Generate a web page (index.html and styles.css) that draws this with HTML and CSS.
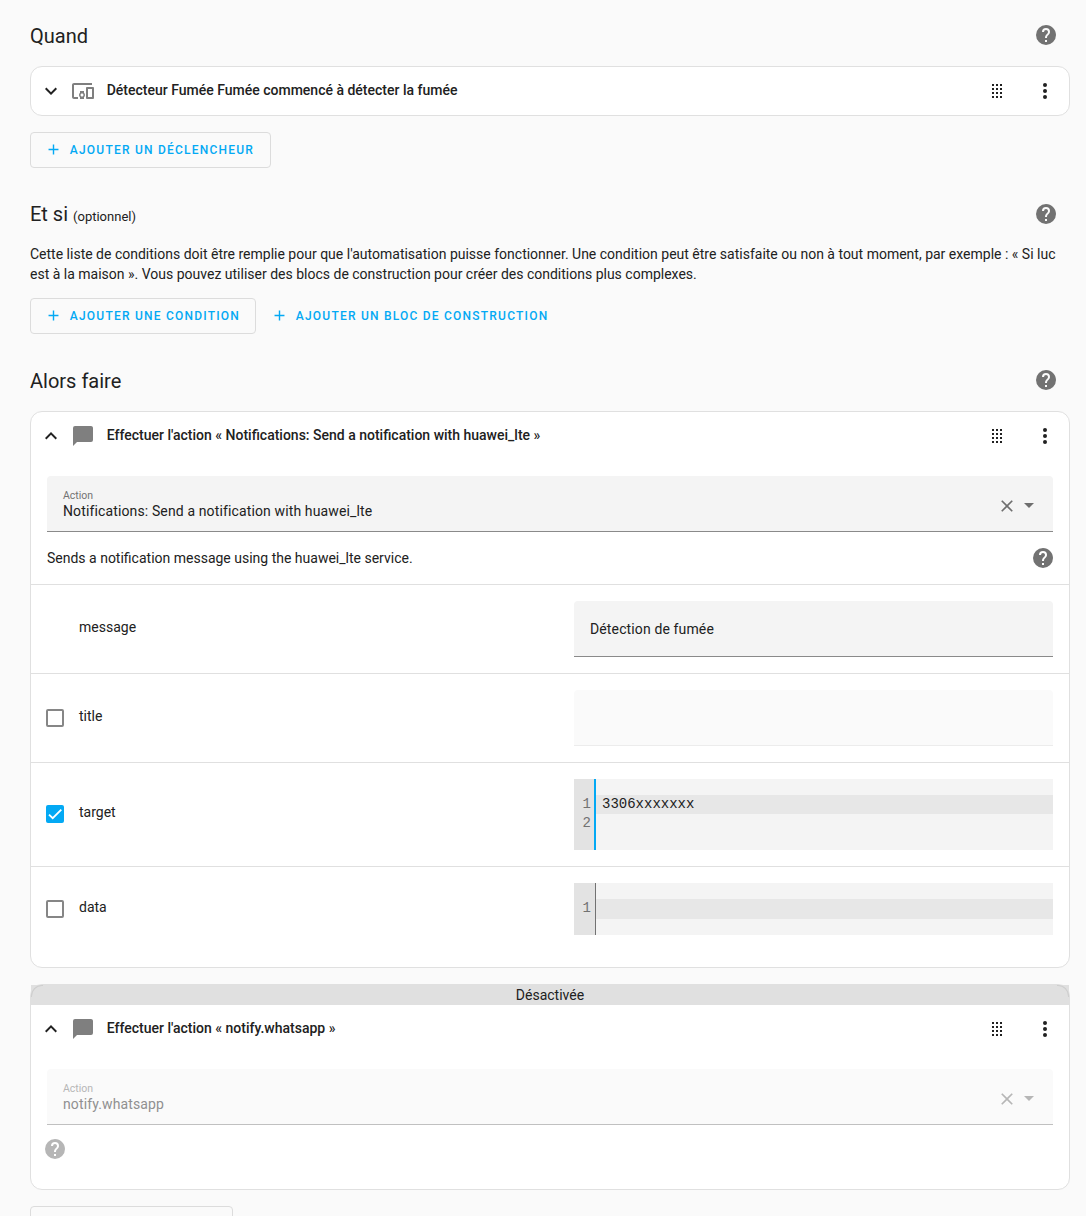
FILE: index.html
```
<!DOCTYPE html>
<html lang="fr">
<head>
<meta charset="utf-8">
<title>Automatisation</title>
<link rel="stylesheet" href="styles.css">
</head>
<body>
<svg class="sprite" aria-hidden="true">
  <symbol id="help" viewBox="0 0 24 24"><path d="M15.07,11.25L14.17,12.17C13.45,12.89 13,13.5 13,15H11V14.5C11,13.39 11.45,12.39 12.17,11.67L13.41,10.41C13.78,10.05 14,9.55 14,9C14,7.89 13.1,7 12,7A2,2 0 0,0 10,9H8A4,4 0 0,1 12,5A4,4 0 0,1 16,9C16,9.88 15.64,10.67 15.07,11.25M13,19H11V17H13M12,2A10,10 0 0,0 2,12A10,10 0 0,0 12,22A10,10 0 0,0 22,12C22,6.47 17.5,2 12,2Z"/></symbol>
  <symbol id="down" viewBox="0 0 24 24"><path d="M7.41,8.58L12,13.17L16.59,8.58L18,10L12,16L6,10L7.41,8.58Z"/></symbol>
  <symbol id="up" viewBox="0 0 24 24"><path d="M7.41,15.41L12,10.83L16.59,15.41L18,14L12,8L6,14L7.41,15.41Z"/></symbol>
  <symbol id="devices" viewBox="0 0 24 24"><path d="M3 6h18V4H3c-1.1 0-2 .9-2 2v12c0 1.1.9 2 2 2h4v-2H3V6zm10 6H9v1.78c-.61.55-1 1.33-1 2.22s.39 1.67 1 2.22V20h4v-1.78c.61-.55 1-1.34 1-2.22s-.39-1.67-1-2.22V12zm-2 5.5c-.83 0-1.5-.67-1.5-1.5s.67-1.5 1.5-1.5 1.5.67 1.5 1.5-.67 1.5-1.5 1.5zM22 8h-6c-.5 0-1 .5-1 1v10c0 .5.5 1 1 1h6c.5 0 1-.5 1-1V9c0-.5-.5-1-1-1zm-1 10h-4v-8h4v8z"/></symbol>
  <symbol id="message" viewBox="0 0 24 24"><path d="M20,2H4A2,2 0 0,0 2,4V22L6,18H20A2,2 0 0,0 22,16V4C22,2.89 21.1,2 20,2Z"/></symbol>
  <symbol id="drag" viewBox="0 0 24 24"><path d="M7,5h2v2h-2zM11,5h2v2h-2zM15,5h2v2h-2zM7,9h2v2h-2zM11,9h2v2h-2zM15,9h2v2h-2zM7,13h2v2h-2zM11,13h2v2h-2zM15,13h2v2h-2zM7,17h2v2h-2zM11,17h2v2h-2zM15,17h2v2h-2z"/></symbol>
  <symbol id="dots" viewBox="0 0 24 24"><circle cx="12" cy="6" r="2"/><circle cx="12" cy="12" r="2"/><circle cx="12" cy="18" r="2"/></symbol>
  <symbol id="close" viewBox="0 0 24 24"><path d="M19,6.41L17.59,5L12,10.59L6.41,5L5,6.41L10.59,12L5,17.59L6.41,19L12,13.41L17.59,19L19,17.59L13.41,12L19,6.41Z"/></symbol>
  <symbol id="caret" viewBox="0 0 24 24"><path d="M7,10L12,15L17,10H7Z"/></symbol>
  <symbol id="plus" viewBox="0 0 24 24"><path d="M19,13H13V19H11V13H5V11H11V5H13V11H19V13Z"/></symbol>
</svg>
<main class="page">
  <header class="section-head first">
    <h2>Quand</h2>
    <svg class="icon help"><use href="#help"/></svg>
  </header>
  <section class="card">
    <div class="card-head">
      <svg class="icon chevron"><use href="#down"/></svg>
      <svg class="icon type"><use href="#devices"/></svg>
      <h3>Détecteur Fumée Fumée commencé à détecter la fumée</h3>
      <svg class="icon"><use href="#drag"/></svg>
      <svg class="icon"><use href="#dots"/></svg>
    </div>
  </section>
  <div class="actions">
    <button class="btn outlined w-trigger"><svg class="icon"><use href="#plus"/></svg><span>Ajouter un déclencheur</span></button>
  </div>

  <header class="section-head second">
    <h2>Et si <small>(optionnel)</small></h2>
    <svg class="icon help"><use href="#help"/></svg>
  </header>
  <p class="intro">Cette liste de conditions doit être remplie pour que l'automatisation puisse fonctionner. Une condition peut être satisfaite ou non à tout moment, par exemple : « Si luc est à la maison ». Vous pouvez utiliser des blocs de construction pour créer des conditions plus complexes.</p>
  <div class="actions">
    <button class="btn outlined w-condition"><svg class="icon"><use href="#plus"/></svg><span>Ajouter une condition</span></button>
    <button class="btn"><svg class="icon"><use href="#plus"/></svg><span>Ajouter un bloc de construction</span></button>
  </div>

  <header class="section-head">
    <h2>Alors faire</h2>
    <svg class="icon help"><use href="#help"/></svg>
  </header>
  <section class="card service">
    <div class="card-head">
      <svg class="icon chevron"><use href="#up"/></svg>
      <svg class="icon type"><use href="#message"/></svg>
      <h3>Effectuer l'action « Notifications: Send a notification with huawei_lte »</h3>
      <svg class="icon"><use href="#drag"/></svg>
      <svg class="icon"><use href="#dots"/></svg>
    </div>
    <div class="select">
      <div class="select-text"><label>Action</label><span>Notifications: Send a notification with huawei_lte</span></div>
      <svg class="icon clear"><use href="#close"/></svg>
      <svg class="icon"><use href="#caret"/></svg>
    </div>
    <div class="description">
      <span>Sends a notification message using the huawei_lte service.</span>
      <svg class="icon help"><use href="#help"/></svg>
    </div>
    <div class="row">
      <span class="check-slot"></span>
      <label>message</label>
      <div class="input">Détection de fumée</div>
    </div>
    <div class="row">
      <span class="check-slot"><span class="checkbox"></span></span>
      <label>title</label>
      <div class="input disabled"></div>
    </div>
    <div class="row tall">
      <span class="check-slot"><span class="checkbox checked"><svg viewBox="0 0 24 24"><path d="M1.73,12.91 8.1,19.28 22.79,4.59"/></svg></span></span>
      <label>target</label>
      <div class="editor focused">
        <div class="gutter"><span>1</span><span>2</span></div>
        <div class="code"><span class="active">3306xxxxxxx</span><span></span></div>
      </div>
    </div>
    <div class="row">
      <span class="check-slot"><span class="checkbox"></span></span>
      <label>data</label>
      <div class="editor">
        <div class="gutter"><span>1</span></div>
        <div class="code"><span class="active"></span></div>
      </div>
    </div>
  </section>

  <section class="card off">
    <div class="banner">Désactivée</div>
    <div class="card-head">
      <svg class="icon chevron"><use href="#up"/></svg>
      <svg class="icon type"><use href="#message"/></svg>
      <h3>Effectuer l'action « notify.whatsapp »</h3>
      <svg class="icon"><use href="#drag"/></svg>
      <svg class="icon"><use href="#dots"/></svg>
    </div>
    <div class="select disabled">
      <div class="select-text"><label>Action</label><span>notify.whatsapp</span></div>
      <svg class="icon clear"><use href="#close"/></svg>
      <svg class="icon"><use href="#caret"/></svg>
    </div>
    <div class="off-help"><svg class="icon help"><use href="#help"/></svg></div>
  </section>
  <div class="actions">
    <button class="btn outlined w-action"></button>
  </div>
</main>
</body>
</html>
```
FILE: styles.css
```
* { box-sizing: border-box; }
html, body { height: 100%; }
body {
  margin: 0;
  overflow: hidden;
  background: #fafafa;
  color: #212121;
  font: 400 14px/20px Roboto, sans-serif;
}
.sprite { display: none; }
.page { height: 1216px; overflow: hidden; padding: 0 16px 0 30px; }
.icon { width: 24px; height: 24px; flex: none; fill: currentColor; display: block; }
.help { color: #727272; }

.section-head {
  display: flex;
  align-items: center;
  justify-content: space-between;
  height: 40px;
  margin: 26px 0 11px;
  padding-right: 12px;
}
.section-head.first { margin-top: 15px; }
.section-head.second { margin-bottom: 10px; }
h2 { margin: 0; font-size: 20px; font-weight: 400; line-height: 28px; padding-top: 2px; }
h2 small { font-size: 13px; }
.intro { margin: 0 0 14px; }

.card { background: #fff; border: 1px solid #e0e0e0; border-radius: 12px; }
.card + .card { margin-top: 16px; }
.card.service { padding-bottom: 16px; }
.card-head { display: flex; align-items: center; height: 48px; padding: 0 12px 0 8px; }
.card-head h3 {
  flex: 1;
  margin: 0 0 0 11.7px;
  padding-bottom: 2px;
  font-size: 14px;
  font-weight: 500;
}
.card-head .type { margin-left: 8px; color: #7f7f7f; }
.card-head .icon:last-child { margin-left: 24px; }

.actions { display: flex; margin-top: 16px; }
.intro + .actions { margin-top: 0; }
.btn {
  display: flex;
  align-items: center;
  height: 36px;
  padding: 0 15px;
  border: 0;
  border-radius: 4px;
  background: none;
  color: #03a9f4;
  font: 500 12px/20px Roboto, sans-serif;
  letter-spacing: 1.22px;
  text-transform: uppercase;
  white-space: nowrap;
}
.btn.outlined { border: 1px solid #dcdcdc; padding: 0 14px; }
.btn .icon { width: 17px; height: 17px; margin: 0 7.8px 1px 0; }
.w-trigger { width: 241px; }
.w-condition { width: 226px; }
.w-action { width: 203px; }

.select {
  display: flex;
  align-items: center;
  height: 56px;
  margin: 16px 16px 0;
  padding: 0 12px 0 16px;
  border-radius: 4px 4px 0 0;
  border-bottom: 1px solid #8a8a8a;
  background: #f4f4f4;
}
.select-text { flex: 1; display: flex; flex-direction: column; padding-top: 4px; }
.select-text label { font-size: 10.5px; line-height: 12px; color: #727272; }
.select-text span { margin-top: -1px; letter-spacing: .13px; }
.select .icon { color: #6e6e6e; margin-top: 3px; }
.select .clear { width: 20px; height: 20px; margin-top: 5px; }
.select.disabled { background: #fafafa; border-color: #c0c0c0; color: #909090; }
.select.disabled label, .select.disabled .icon { color: #b6b6b6; }

.description {
  display: flex;
  align-items: center;
  justify-content: space-between;
  height: 52px;
  padding: 0 14px 0 16px;
}
.row {
  display: grid;
  grid-template-columns: 48px 1fr 479px;
  align-items: center;
  border-top: 1px solid #e0e0e0;
  padding: 16px 16px 16px 0;
}
.row label { padding-bottom: 4px; }
.tall label { padding-bottom: 5px; }
.tall .check-slot { padding-bottom: 1px; }
.check-slot { padding-left: 15px; }
.checkbox { display: block; width: 18px; height: 18px; border: 2px solid #868686; border-radius: 2px; }
.checkbox.checked { border-color: #03a9f4; background: #03a9f4; }
.checkbox svg { display: block; width: 14px; height: 14px; fill: none; stroke: #fff; stroke-width: 3.12; }
.input {
  height: 56px;
  padding: 0 16px;
  border-radius: 4px 4px 0 0;
  border-bottom: 1px solid #8a8a8a;
  background: #f4f4f4;
  line-height: 56px;
  letter-spacing: .13px;
}
.input.disabled { background: #fafafa; border-color: #ececec; }

.editor {
  display: flex;
  height: 52px;
  background: #f4f4f4;
  font: 14px/19px "Liberation Mono", monospace;
}
.editor.focused { height: 71px; }
.gutter {
  width: 22px;
  padding: 16px 4px 0 0;
  border-right: 1px solid #727272;
  background: #e3e3e3;
  color: #727272;
  text-align: right;
}
.focused .gutter { border-right: 2px solid #03a9f4; padding-right: 3px; }
.gutter span, .code span { display: block; height: 20px; }
.focused .gutter span, .focused .code span { height: 19px; }
.code { flex: 1; padding-top: 16px; }
.code span { padding-left: 6px; }
.code .active { background: #e7e7e7; }

.off { position: relative; }
.off::before, .off::after {
  content: "";
  position: absolute;
  z-index: 1;
  top: 0;
  width: 11px;
  height: 11px;
  border: 0 solid #cecece;
}
.off::before { left: 0; border-width: 1px 0 0 1px; border-top-left-radius: 11px; }
.off::after { right: 0; border-width: 1px 1px 0 0; border-top-right-radius: 11px; }
.banner { height: 20px; background: #e0e0e0; text-align: center; }
.off-help { height: 64px; padding: 12px; }
.off-help .icon { color: #b6b6b6; }
```
